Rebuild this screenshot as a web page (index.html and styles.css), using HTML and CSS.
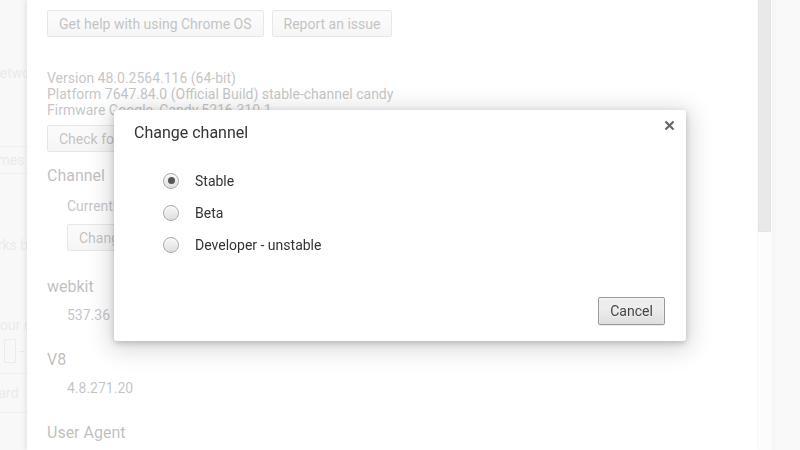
FILE: index.html
```html
<!DOCTYPE html>
<html lang="en">
<head>
    <meta charset="UTF-8">
    <title>About Chrome OS - Change channel</title>
    <link rel="stylesheet" href="styles.css">
</head>
<body>

    <!-- settings page under the dialog -->
    <div class="settings">
        <div class="behind">
            <div class="behind-text net">network</div>
            <div class="behind-row">Themes</div>
            <div class="behind-text marks">Bookmarks bar</div>
            <div class="behind-text dev">Your devices</div>
            <div class="behind-icon"><span class="doc"></span><span class="dash"></span></div>
            <div class="behind-row board">Keyboard</div>
        </div>

        <div class="panel">
            <div class="button-row">
                <button class="page-button">Get help with using Chrome OS</button>
                <button class="page-button">Report an issue</button>
            </div>

            <div class="version">
                Version 48.0.2564.116 (64-bit)<br>
                Platform 7647.84.0 (Official Build) stable-channel candy<br>
                Firmware Google_Candy.5216.310.1
            </div>
            <button class="page-button check">Check for and apply updates</button>

            <h3 class="section channel">Channel</h3>
            <div class="value current">Currently on stable</div>
            <button class="page-button indent">Change channel</button>

            <h3 class="section">webkit</h3>
            <div class="value">537.36</div>

            <h3 class="section">V8</h3>
            <div class="value">4.8.271.20</div>

            <h3 class="section">User Agent</h3>
        </div>

        <div class="scrollbar"><div class="thumb"></div></div>
        <div class="edge"></div>
    </div>

    <!-- dialog -->
    <div class="backdrop">
        <div class="dialog">
            <div class="dialog-title">Change channel</div>
            <button class="close-button" aria-label="Close">
                <svg width="11" height="11" viewBox="0 0 11 11">
                    <path d="M1.5 1.5 L9.5 9.5 M9.5 1.5 L1.5 9.5" stroke="#666" stroke-width="2.2" fill="none"/>
                </svg>
            </button>

            <div class="channel-list">
                <label class="channel-option"><span class="radio checked"></span>Stable</label>
                <label class="channel-option"><span class="radio"></span>Beta</label>
                <label class="channel-option"><span class="radio"></span>Developer - unstable</label>
            </div>

            <div class="dialog-footer">
                <button class="cancel-button">Cancel</button>
            </div>
        </div>
    </div>

</body>
</html>
```

FILE: styles.css
```css
body, html {
    margin: 0;
    padding: 0;
    width: 800px;
    height: 450px;
    overflow: hidden;
    font-family: Roboto, "Liberation Sans", sans-serif;
    background: #fff;
}

/* settings page */
.settings {
    display: flex;
    height: 450px;
}

.behind {
    width: 27px;
    flex-shrink: 0;
    overflow: hidden;
    background: #e6e6e6;
    color: #b8b8b8;
    font-size: 14px;
    white-space: nowrap;
}

.behind-text {
    line-height: 18px;
}

.net {
    margin: 64px 0 0 -8px;
}

.behind-row {
    margin-top: 64px;
    height: 26px;
    line-height: 26px;
    border-top: 1px solid #c8c8c8;
    border-bottom: 1px solid #c8c8c8;
    text-indent: -26px;
}

.marks {
    margin: 62px 0 0 -54px;
}

.dev {
    margin: 62px 0 0 -8px;
}

.behind-icon {
    display: flex;
    align-items: center;
    gap: 3px;
    margin: 4px 0 0 4px;
    height: 26px;
}

.doc {
    width: 10px;
    height: 22px;
    border: 1px solid #bbb;
    border-radius: 1px;
}

.dash {
    width: 6px;
    height: 1px;
    background: #bbb;
}

.behind-row.board {
    margin-top: 9px;
    height: 38px;
    line-height: 38px;
    text-indent: -40px;
}

.panel {
    width: 710px;
    flex-shrink: 0;
    padding-left: 20px;
    background: #fff;
    color: #3a3a3a;
    font-size: 14px;
    box-shadow: -2px 0 4px rgba(0, 0, 0, 0.25);
    position: relative;
}

.button-row {
    display: flex;
    gap: 8px;
    margin-top: 10px;
}

.page-button {
    height: 27px;
    padding: 0 11px;
    font-family: inherit;
    font-size: 14px;
    color: #333;
    background: linear-gradient(#ededed, #ededed 38%, #dedede);
    border: 1px solid #b0b0b0;
    border-radius: 2px;
    display: block;
}

.version {
    margin-top: 33px;
    line-height: 16px;
}

.check {
    margin-top: 7px;
}

.section {
    margin: 26px 0 0;
    font-size: 16px;
    font-weight: normal;
    line-height: 20px;
    color: #2a2a2a;
}

.section.channel {
    margin-top: 14px;
}

.value {
    margin: 9px 0 0 20px;
    line-height: 18px;
}

.current {
    margin-top: 11px;
}

.indent {
    margin: 9px 0 0 20px;
}

.scrollbar {
    width: 15px;
    flex-shrink: 0;
    background: #f4f4f4;
}

.thumb {
    margin: 0 1px;
    height: 231px;
    background: #b6b6b6;
    border: 1px solid #a6a6a6;
    border-top: none;
}

.edge {
    flex: 1;
    background: linear-gradient(to right, #dcdcdc, #eaeaea 6px, #ececec);
}

/* dialog */
.backdrop {
    position: fixed;
    top: 0;
    left: 0;
    width: 800px;
    height: 450px;
    background: rgba(255, 255, 255, 0.7);
    display: flex;
    justify-content: center;
    align-items: center;
}

.dialog {
    position: relative;
    width: 572px;
    height: 231px;
    box-sizing: border-box;
    background: #fff;
    border-radius: 3px;
    box-shadow: 0 4px 23px 5px rgba(0, 0, 0, 0.15), 0 2px 6px rgba(0, 0, 0, 0.2);
    display: flex;
    flex-direction: column;
    color: #333;
}

.dialog-title {
    padding: 13px 20px 0;
    font-size: 16px;
    line-height: 20px;
}

.close-button {
    position: absolute;
    top: 10px;
    right: 11px;
    width: 11px;
    height: 11px;
    padding: 0;
    border: none;
    background: none;
}

.close-button svg {
    display: block;
}

.channel-list {
    margin-top: 22px;
    padding-left: 49px;
}

.channel-option {
    display: flex;
    align-items: center;
    gap: 16px;
    height: 32px;
    font-size: 14px;
}

.radio {
    width: 16px;
    height: 16px;
    box-sizing: border-box;
    border-radius: 50%;
    border: 1px solid #a8a8a8;
    background: linear-gradient(#f6f6f6, #ececec 50%, #dedede);
    box-shadow: inset 0 1px 2px #fff;
    display: flex;
    justify-content: center;
    align-items: center;
}

.radio.checked::after {
    content: "";
    width: 7px;
    height: 7px;
    border-radius: 50%;
    background: #555;
}

.dialog-footer {
    margin-top: auto;
    padding: 0 21px 16px;
    display: flex;
    justify-content: flex-end;
}

.cancel-button {
    height: 28px;
    width: 67px;
    padding: 0;
    font-family: inherit;
    font-size: 14px;
    color: #444;
    background: linear-gradient(#ededed, #ededed 38%, #dedede);
    border: 1px solid #999;
    border-radius: 2px;
    box-shadow: 0 1px 0 rgba(0, 0, 0, 0.08), inset 0 1px 2px rgba(255, 255, 255, 0.75);
    text-shadow: 0 1px 0 #f0f0f0;
}
```
